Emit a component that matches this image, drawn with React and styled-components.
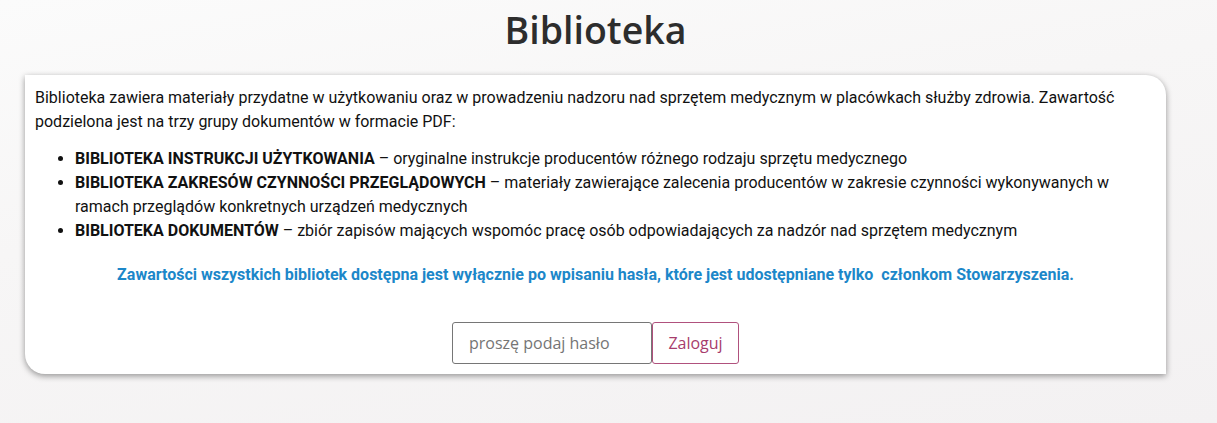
import React, { useState } from "react";
import styled, { createGlobalStyle } from "styled-components";

const GlobalStyle = createGlobalStyle`
  html, body {
    margin: 0;
    padding: 0;
  }
  body {
    min-height: 423px;
    background: linear-gradient(170deg, #fbfbfb 0%, #f7f6f6 40%, #f3f1f2 100%);
    font-family: "Roboto", "Liberation Sans", sans-serif;
    color: #111;
  }
`;

const Page = styled.div`
  width: 1141px;
  margin-left: 25px;
  padding-top: 4px;
`;

const Title = styled.h1`
  margin: 0 0 20px;
  height: 51px;
  text-align: center;
  font-family: "Open Sans", "Noto Sans", sans-serif;
  font-weight: 600;
  font-size: 37.5px;
  line-height: 51px;
  color: #2d2d2d;
`;

const Card = styled.div`
  background: #fff;
  border-radius: 0 20px 0 20px;
  box-shadow: 0 2px 6px rgba(0, 0, 0, 0.4);
  padding: 11px 10px 10px;
  font-size: 16px;
  line-height: 24px;
`;

const Intro = styled.p`
  margin: 0 0 13px;
`;

const List = styled.ul`
  margin: 0 0 20px;
  padding-left: 40px;
`;

const Note = styled.p`
  margin: 0 0 35px;
  text-align: center;
  font-weight: 700;
  font-size: 16px;
  color: #1c87c9;
`;

const LoginRow = styled.form`
  display: flex;
  justify-content: center;
`;

const PasswordInput = styled.input`
  box-sizing: border-box;
  width: 200px;
  height: 42px;
  padding: 0 16px;
  border: 1px solid #767676;
  border-radius: 3px;
  font-family: "Open Sans", "Noto Sans", sans-serif;
  font-size: 16px;
  color: #333;
  outline: none;
  &::placeholder {
    color: #757575;
  }
`;

const LoginButton = styled.button`
  box-sizing: border-box;
  width: 87px;
  height: 42px;
  border: 1px solid #b0517d;
  border-radius: 3px;
  background: #fff;
  font-family: "Open Sans", "Noto Sans", sans-serif;
  font-size: 16px;
  color: #a73c6c;
  cursor: pointer;
`;

const App = () => {
  const [password, setPassword] = useState("");

  return (
    <>
      <GlobalStyle />
      <Page>
        <Title>Biblioteka</Title>
        <Card>
          <Intro>
            Biblioteka zawiera materiały przydatne w użytkowaniu oraz w prowadzeniu nadzoru nad
            sprzętem medycznym w placówkach służby zdrowia. Zawartość podzielona jest na trzy grupy
            dokumentów w formacie PDF:
          </Intro>
          <List>
            <li>
              <strong>BIBLIOTEKA INSTRUKCJI UŻYTKOWANIA</strong> – oryginalne instrukcje producentów
              różnego rodzaju sprzętu medycznego
            </li>
            <li>
              <strong>BIBLIOTEKA ZAKRESÓW CZYNNOŚCI PRZEGLĄDOWYCH</strong> – materiały zawierające
              zalecenia producentów w zakresie czynności wykonywanych w ramach przeglądów konkretnych
              urządzeń medycznych
            </li>
            <li>
              <strong>BIBLIOTEKA DOKUMENTÓW</strong> – zbiór zapisów mających wspomóc pracę osób
              odpowiadających za nadzór nad sprzętem medycznym
            </li>
          </List>
          <Note>
            Zawartości wszystkich bibliotek dostępna jest wyłącznie po wpisaniu hasła, które jest
            udostępniane tylko&nbsp; członkom Stowarzyszenia.
          </Note>
          <LoginRow onSubmit={(e) => e.preventDefault()}>
            <PasswordInput
              type="password"
              placeholder="proszę podaj hasło"
              value={password}
              onChange={(e) => setPassword(e.target.value)}
            />
            <LoginButton type="submit">Zaloguj</LoginButton>
          </LoginRow>
        </Card>
      </Page>
    </>
  );
};

export default App;
